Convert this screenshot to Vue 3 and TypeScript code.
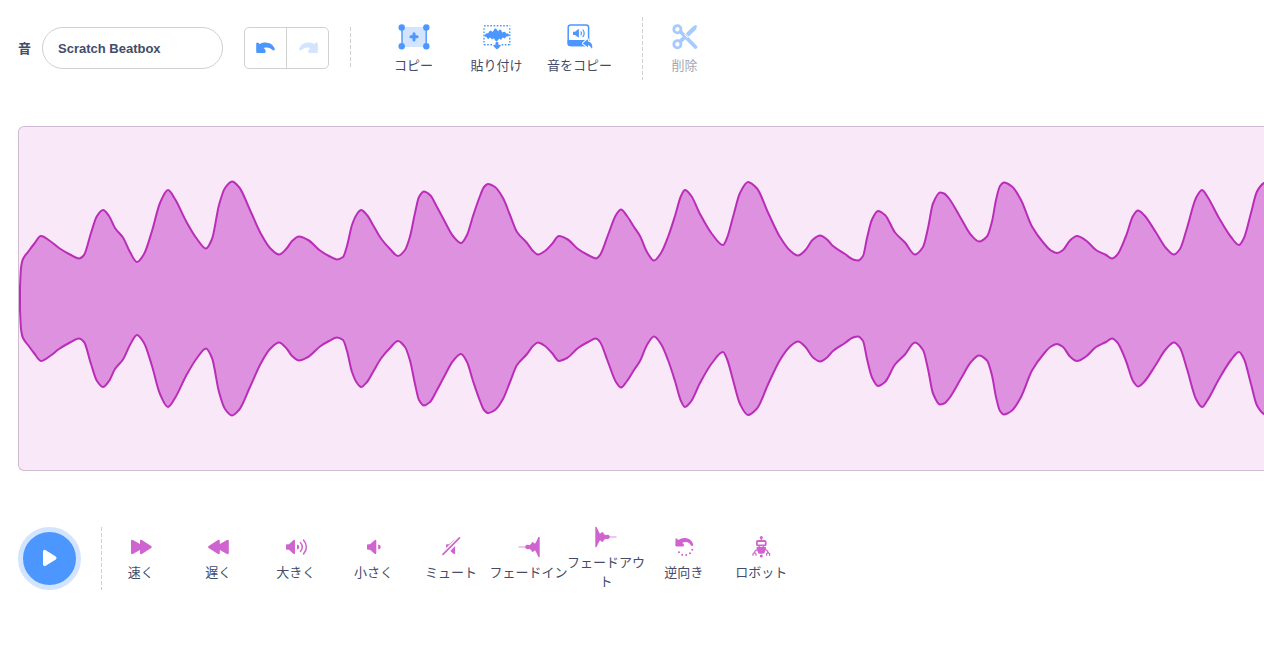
<script setup lang="ts">
import { ref } from 'vue'

type Point = [number, number]

const soundName = ref('Scratch Beatbox')

// Upper edge of the waveform; the lower edge is its reflection in the axis.
const AXIS = 171.5
const envelope: Point[] = [
  [1, 160], [2, 141], [4, 132], [9, 125], [15, 117], [22, 109], [31, 114], [40, 121], [51, 127.5], [60, 131.5],
  [65, 128], [72, 106], [78, 89], [84, 83], [90, 89], [96, 101], [104, 110.5], [111, 125], [118, 135], [125, 127],
  [133, 104], [141, 76], [149, 63], [156, 72], [167, 94], [178, 112], [187, 121.5], [193, 112], [200, 78], [206, 61],
  [213, 54.5], [220, 60], [231, 83], [242, 107], [251, 121], [260, 127.5], [268, 121], [273, 114], [280, 109.5],
  [289, 113], [301, 123.5], [310, 129], [318, 132.5], [324, 130], [328, 119], [333, 98], [338, 87], [342, 83],
  [348, 88], [354, 98], [362, 111.5], [371, 122], [379, 129], [386, 123], [391, 109.5], [396, 86], [400, 70],
  [405, 64.5], [411, 68], [418, 80], [426, 95], [434, 109], [442, 116], [448, 108], [454, 89], [461, 69], [465, 60],
  [469, 57], [476, 60], [484, 71], [491, 88], [498, 105], [508, 116], [514, 124], [519, 127.5], [526, 124],
  [533, 117], [540, 109], [548, 112], [559, 122], [569, 128], [577, 131.5], [581, 128], [589, 108], [597, 88],
  [602, 82.5], [608, 89], [615, 100], [621, 109], [628, 125], [635, 133.5], [642, 126], [649, 110], [656, 89],
  [662, 69], [666, 63], [672, 68.5], [681, 87], [693, 107], [704, 118], [708, 111], [714, 90], [721, 66],
  [729, 55], [738, 61.5], [749, 85.5], [761, 110], [771, 123.5], [779, 128.5], [786, 123.5], [794, 112.5],
  [801, 108.5], [808, 112.5], [814, 119], [826, 127], [834, 132.5], [839, 133.5], [844, 129], [848, 111],
  [853, 92.5], [859, 84], [866, 88], [876, 105.5], [886, 115.5], [896, 127.5], [904, 120], [909, 101], [914, 76.5],
  [921, 65.5], [925, 66.5], [930, 71.5], [942, 91.5], [952, 108], [960, 114.5], [968, 109.5], [973, 94.5],
  [977, 73], [981, 59], [985, 55.5], [993, 59.5], [1002, 73], [1013, 99.5], [1025, 116.5], [1032, 123.5],
  [1038, 126], [1044, 123], [1051, 113.5], [1058, 109], [1067, 113.5], [1077, 123], [1087, 128], [1093, 131.5],
  [1098, 128], [1107, 109], [1114, 89], [1119, 83.5], [1125, 88], [1137, 105.5], [1147, 121], [1155, 127.5],
  [1161, 122], [1168, 101], [1177, 71], [1183, 63], [1188, 69], [1200, 91], [1212, 110], [1220, 118], [1225, 111],
  [1232, 86], [1238, 64.5], [1245, 56], [1251, 54],
]

// Monotone cubic interpolation: smooth, and flat at every peak and trough.
function curve(points: Point[]): string {
  const slope = points.slice(1).map((p, i) => (p[1] - points[i][1]) / (p[0] - points[i][0]))
  const tangent = points.map((_, i) => {
    if (i === 0) return slope[0]
    if (i === points.length - 1) return slope[i - 1]
    const a = slope[i - 1]
    const b = slope[i]
    return a * b <= 0 ? 0 : (2 * a * b) / (a + b)
  })
  return points
    .slice(1)
    .map((p, i) => {
      const q = points[i]
      const h = (p[0] - q[0]) / 3
      return `C${q[0] + h} ${q[1] + h * tangent[i]} ${p[0] - h} ${p[1] - h * tangent[i + 1]} ${p[0]} ${p[1]}`
    })
    .join('')
}

const upper = curve(envelope)
const lower = curve(envelope.map(([x, y]): Point => [x, 2 * AXIS - y]))
const start = envelope[0]
const startLow = 2 * AXIS - start[1]
const fillPath =
  `M${start[0]} ${start[1]}${upper}V${AXIS}H${start[0]}Z` +
  `M${start[0]} ${startLow}${lower}V${AXIS}H${start[0]}Z`
const linePath = `M${start[0]} ${startLow}V${start[1]}${upper}M${start[0]} ${startLow}${lower}`

const effects = [
  { id: 'faster', label: '速く' },
  { id: 'slower', label: '遅く' },
  { id: 'louder', label: '大きく' },
  { id: 'softer', label: '小さく' },
  { id: 'mute', label: 'ミュート' },
  { id: 'fade-in', label: 'フェードイン' },
  { id: 'fade-out', label: 'フェードアウト' },
  { id: 'reverse', label: '逆向き' },
  { id: 'robot', label: 'ロボット' },
]
</script>

<template>
  <main class="editor">
    <header class="toolbar">
      <label class="name-label" for="sound-name">音</label>
      <input id="sound-name" v-model="soundName" class="name-input" type="text" />

      <div class="history">
        <button type="button" aria-label="Undo">
          <svg width="20" height="12" viewBox="0 0 20 12">
            <path class="solid" d="M1 .8C1.6.3 2.2.6 2.8 1.2L3.7 2C5.5 1 7.5.6 9.5.6C14 .6 17.6 3.4 18.8 7C19.1 8.3 17.5 8.9 16.5 8C14.5 5.9 12 5.1 8.4 5.7L7.9 6.1L9.4 8C10 9 9.8 10.9 8.8 10.9L1.4 11Q.2 11 .2 9.9V1.6Q.3 1 1 .8Z" />
          </svg>
        </button>
        <button type="button" aria-label="Redo" disabled>
          <svg width="20" height="12" viewBox="0 0 20 12">
            <path class="solid" transform="matrix(-1 0 0 1 20 0)" d="M1 .8C1.6.3 2.2.6 2.8 1.2L3.7 2C5.5 1 7.5.6 9.5.6C14 .6 17.6 3.4 18.8 7C19.1 8.3 17.5 8.9 16.5 8C14.5 5.9 12 5.1 8.4 5.7L7.9 6.1L9.4 8C10 9 9.8 10.9 8.8 10.9L1.4 11Q.2 11 .2 9.9V1.6Q.3 1 1 .8Z" />
          </svg>
        </button>
      </div>

      <span class="divider short"></span>

      <div class="tools">
        <button type="button" class="tool">
          <svg width="32" height="26" viewBox="0 0 32 26">
            <path class="pale" d="M4 3H28V23H4Z" />
            <path class="line" stroke-width="1.4" d="M4 4V22M28.2 4V22" />
            <g class="solid">
              <circle cx="3.7" cy="3.5" r="3.2" /><circle cx="28.3" cy="3.5" r="3.2" />
              <circle cx="3.7" cy="22.2" r="3.2" /><circle cx="28.3" cy="22.2" r="3.2" />
            </g>
            <path class="line" stroke-width="3" stroke-linecap="round" d="M16 9.7V15.9M12.9 12.8H19.1" />
          </svg>
          <span>コピー</span>
        </button>
        <button type="button" class="tool">
          <svg width="28" height="26" viewBox="0 0 28 26">
            <path class="line" stroke-width="1.4" stroke-dasharray="1.6 1.6" d="M1 1.7H27.2M1 4.2V21M26.8 4.2V21M1 20.8H9.5M18.6 20.8H27.2" />
            <path class="solid" d="M1.5 11.3L3.5 9.3H5L7 6.8Q7.7 6.2 8.4 7L9.7 8L11.6 4.8Q12.4 4 13.2 4.8L15 7.3L16.5 5.8Q17.3 5.2 18 6L19.3 8.5L21.3 7.7Q22 7.5 22.5 8.5L23.3 9.4H25L26.5 10.8L25 12.4H23.3L21.9 14.5L19.7 13.6L18 16.1L16.3 14.5L14.3 17Q13.4 17.7 12.7 17L10.8 14.3L9 15.4L7.3 13.6L5 15.3L3.7 13.2L1.5 12.2Z" />
            <path class="solid" d="M12.5 18.5Q14 17.1 15.4 18.5V20.8H17Q18.3 21 17.4 22.2L14.7 25Q14 25.7 13.3 25L10.6 22.2Q9.7 21 11 20.8H12.5Z" />
          </svg>
          <span>貼り付け</span>
        </button>
        <button type="button" class="tool">
          <svg width="26" height="26" viewBox="0 0 26 26">
            <rect class="line" stroke-width="1.5" x="1.2" y="1.1" width="20.4" height="20.4" rx="2.5" />
            <path class="solid" d="M.6 16H22.3V19.5Q22.3 22.2 19.6 22.2H3.3Q.6 22.2 .6 19.5Z" />
            <path class="solid" d="M6 7.8H8L11.1 5.2Q11.9 4.9 11.9 5.7V13Q11.9 13.7 11.1 13.3L8 11H6Z" />
            <path class="line" stroke-width="1.2" stroke-linecap="round" d="M14 7.8Q15 9.3 14 10.8M16 6Q18.3 9.3 16 12.6" />
            <path class="reply" d="M16.2 19.1L20.3 15.4Q21 15 21 15.8V17.5Q25.7 18.2 25.3 24Q25.2 24.8 24.5 24.2Q23.2 21.2 21 20.9V22.6Q20.9 23.2 20.3 22.7L16.2 19.8Q15.8 19.4 16.2 19.1Z" />
          </svg>
          <span>音をコピー</span>
        </button>
      </div>

      <span class="divider"></span>

      <button type="button" class="tool delete" disabled>
        <svg width="26" height="26" viewBox="0 0 26 26">
          <path class="line" stroke-width="3.7" stroke-linecap="round" d="M8.5 7.8L23.5 23" />
          <path class="line" stroke-width="3.8" d="M8.3 17.2L12.5 13.5M15.2 11L23.5 3.4" />
          <path class="solid" d="M14 9.4L21.6 2Q24 .4 25.4 2.3L17 12Z" />
          <path class="gap" d="M12.5 10.5L16 14" />
          <circle class="line" stroke-width="2.8" cx="5.4" cy="5.2" r="3.6" />
          <circle class="line" stroke-width="2.8" cx="5.4" cy="20.3" r="3.6" />
        </svg>
        <span>削除</span>
      </button>
    </header>

    <section class="wave" aria-label="Waveform">
      <svg viewBox="0 0 1245 343" preserveAspectRatio="none">
        <path class="wave-fill" :d="fillPath" />
        <path class="wave-line" :d="linePath" />
      </svg>
    </section>

    <footer class="controls">
      <button type="button" class="play" aria-label="Play">
        <svg width="16" height="18" viewBox="0 0 16 18">
          <path fill="#fff" d="M1 2.4Q1.2.2 3.3 1L13.8 7.5Q15.5 9 13.8 10.4L3.3 16.9Q1.2 17.6 1 15.6Z" />
        </svg>
      </button>
      <span class="divider"></span>

      <div class="effects">
        <button v-for="effect in effects" :key="effect.id" type="button" class="effect">
          <svg width="24" height="24" viewBox="0 0 24 24">
            <path v-if="effect.id === 'faster'" class="solid" d="M2 6Q2.1 4.2 3.8 4.9L11 9V6Q11.2 4.2 12.8 4.9L22.2 11Q23.4 12 22.2 13L12.8 19Q11.1 19.6 11 18V15L3.8 19Q2.1 19.6 2 18Z" />
            <path v-else-if="effect.id === 'slower'" class="solid" d="M22.8 6Q22.7 4.2 21 4.9L13.8 9V6Q13.6 4.2 12 4.9L2.6 11Q1.4 12 2.6 13L12 19Q13.7 19.6 13.8 18V15L21 19Q22.7 19.6 22.8 18Z" />
            <template v-else-if="effect.id === 'louder'">
              <path class="solid" d="M3 9.3H5L9.3 5.2Q11 4.2 11 6V18Q11 19.8 9.3 18.8L5 14.7H3Q2 14.7 2 13.7V10.3Q2 9.3 3 9.3Z" />
              <path class="solid" d="M13 9.5Q15.2 9.7 15.3 12Q15.2 14.3 13 14.5Z" />
              <path class="line" stroke-width="1.5" stroke-linecap="round" d="M16.5 7.6Q20 12 16.5 16.4M19.5 5Q25.3 12 19.5 19" />
            </template>
            <template v-else-if="effect.id === 'softer'">
              <path class="solid" d="M7 9.3H9L13.6 5.2Q15.3 4.2 15.3 6V18Q15.3 19.8 13.6 18.8L9 14.7H7Q6 14.7 6 13.7V10.3Q6 9.3 7 9.3Z" />
              <path class="solid" d="M17.2 9.5Q19.6 9.7 19.8 12Q19.6 14.3 17.2 14.5Z" />
            </template>
            <template v-else-if="effect.id === 'mute'">
              <path class="solid" d="M8 9.3H10L14.4 5.2Q16.1 4.2 16.1 6V18Q16.1 19.8 14.4 18.8L10 14.7H8Q7 14.7 7 13.7V10.3Q7 9.3 8 9.3Z" />
              <path stroke="#fff" stroke-width="5" d="M4 19.7L20.5 3" />
              <path class="line" stroke-width="1.7" stroke-linecap="round" d="M4 19.3L20.5 2.8" />
            </template>
            <g v-else-if="effect.id === 'fade-in' || effect.id === 'fade-out'" :transform="effect.id === 'fade-out' ? 'matrix(-1 0 0 1 24 0)' : undefined">
              <path class="line" stroke-width="1" opacity=".7" d="M1.5 12H10" />
              <path class="solid" d="M8.3 11.2Q9 9.6 11 9.8L12.5 10.3Q12.7 9.2 14 9.2L14.7 7.7Q15.5 6.5 16.5 7.5L18 8.7L19.3 6.5L21.3 2.3Q21.9 1.2 22.7 2V22Q21.9 22.8 21.3 21.7L19.3 17.5L18 15.3L16.5 16.5Q15.5 17.5 14.7 16.3L14 14.8Q12.7 14.8 12.5 13.7L11 14.2Q9 14.4 8.3 12.8Z" />
            </g>
            <template v-else-if="effect.id === 'reverse'">
              <path class="solid" d="M3.6 3.6Q4.4 3 5.1 3.8L6.3 5Q9.5 2.7 13 2.9C17.5 3.2 20.8 6 21.3 10Q21.2 11.2 20 11Q18.9 10.8 18.5 9.7C16.8 6.9 13.5 6.2 10.3 7.8L12 9.7Q12.3 11.2 11 11.4H4.5Q3.3 11.4 3.3 10.3Z" />
              <path class="dots" d="M7 17.2H7M10.2 19.8H10.2M14.2 20.1H14.2M18 18.2H18M20.3 14.8H20.3" />
            </template>
            <template v-else>
              <circle class="solid" cx="12.3" cy="2.5" r="1.5" />
              <path class="line" stroke-width="1.2" d="M12.3 3V6M10.2 10.5V12.5M14.4 10.5V12.5M8.5 14.5Q5.8 15 5.4 18M16.1 14.5Q18.8 15 19.2 18" />
              <rect class="line" stroke-width="1.8" x="7.9" y="6" width="8.8" height="4.4" rx="1" />
              <path class="solid" d="M8.2 11.9H16.4Q17.3 12 17 13.2L16 16.8Q15.4 18.6 14.2 18.7H10.4Q9.2 18.6 8.6 16.8L7.6 13.2Q7.3 12 8.2 11.9Z" />
              <path class="line" stroke-width="1.2" stroke-linecap="round" d="M4 20.3V18.8L5.5 17.6L7 18.8V20.3M17.6 20.3V18.8L19.1 17.6L20.6 18.8V20.3" />
              <circle class="solid" cx="12.3" cy="21" r="1.5" />
            </template>
          </svg>
          <span>{{ effect.label }}</span>
        </button>
      </div>
    </footer>
  </main>
</template>

<style>
body {
  margin: 0;
  background: #fff;
}
</style>

<style scoped>
.editor {
  padding: 16px 0 0 18px;
  overflow: hidden;
  color: #444c69;
  font: 13px/19px "Liberation Sans", "Noto Sans CJK JP", sans-serif;
}
button,
input {
  box-sizing: border-box;
  margin: 0;
  font: inherit;
  color: inherit;
}
button {
  padding: 0;
  border: 0;
  background: none;
}
svg {
  display: block;
  flex: none;
  fill: none;
}
.solid {
  fill: currentColor;
}
.line {
  stroke: currentColor;
}
.pale {
  fill: #d3e4ff;
}
.toolbar {
  display: flex;
  align-items: center;
  height: 64px;
}
.name-label {
  width: 24px;
  font-weight: 700;
}
.name-input {
  width: 181px;
  height: 42px;
  padding: 0 15px;
  border: 1px solid #d0d0d0;
  border-radius: 21px;
  background: #fff;
  font-weight: 700;
  outline: 0;
}
.history {
  display: flex;
  box-sizing: border-box;
  width: 85px;
  height: 42px;
  margin: 0 21px;
  border: 1px solid #d0d0d0;
  border-radius: 5px;
  color: #4c97ff;
}
.history button {
  display: flex;
  flex: 1;
  align-items: center;
  justify-content: center;
}
.history button + button {
  border-left: 1px solid #d0d0d0;
}
.history button:disabled {
  color: #d3e4ff;
}
.divider {
  flex: none;
  width: 1px;
  height: 63px;
  background: repeating-linear-gradient(#cfcfcf 0 4px, transparent 4px 6px);
}
.divider.short {
  height: 42px;
}
.tools {
  display: flex;
  margin: 0 21px;
}
.tool {
  display: flex;
  flex-direction: column;
  align-items: center;
  gap: 6px;
  width: 83px;
  height: 64px;
  padding-top: 8px;
  white-space: nowrap;
}
.tool svg {
  color: #4c97ff;
}
.delete {
  opacity: 0.5;
}
.reply {
  fill: #4c97ff;
  stroke: #fff;
  stroke-width: 2;
  paint-order: stroke;
}
.gap {
  stroke: #fff;
  stroke-width: 1;
}
.wave {
  height: 343px;
  margin-top: 46px;
  border: 1px solid #d0bdd3;
  border-right: 0;
  border-radius: 6px 0 0 6px;
  background: #f9e8f8;
  overflow: hidden;
}
.wave svg {
  width: 100%;
  height: 100%;
}
.wave-fill {
  fill: #de91df;
}
.wave-line {
  stroke: #b92db8;
  stroke-width: 2;
  stroke-linejoin: round;
}
.controls {
  display: flex;
  align-items: center;
  margin-top: 54px;
}
.play {
  display: flex;
  flex: none;
  align-items: center;
  justify-content: center;
  width: 63px;
  height: 63px;
  margin-right: 20px;
  border: 5px solid #d3e4ff;
  border-radius: 50%;
  background: #4c97ff;
}
.effects {
  display: grid;
  grid-template-columns: repeat(9, 1fr);
  align-items: center;
  width: 698px;
}
.effect {
  display: flex;
  flex-direction: column;
  align-items: center;
  gap: 4px;
}
.effect svg {
  color: #cf63cf;
}
.effect span {
  width: 80px;
  margin: 0 -4px;
}
.dots {
  stroke: currentColor;
  stroke-width: 2;
  stroke-linecap: round;
}
</style>
